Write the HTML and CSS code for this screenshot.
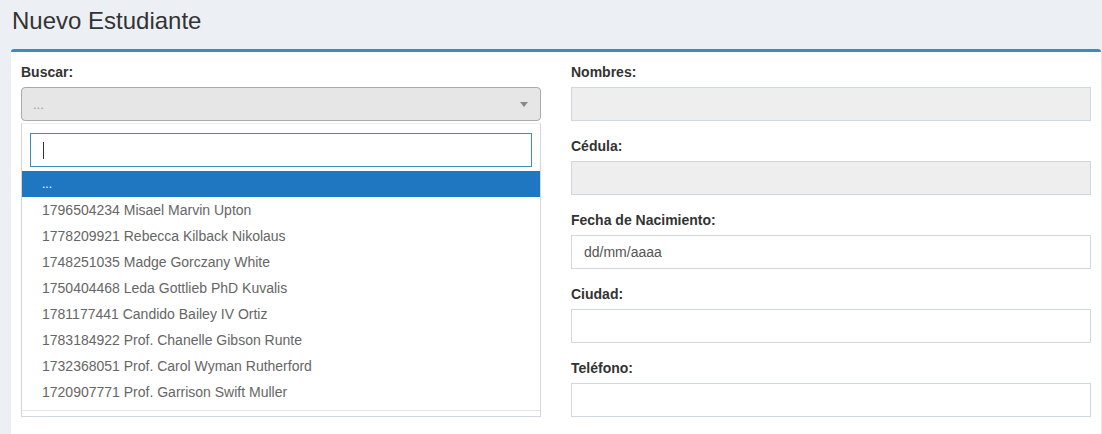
FILE: index.html
```html
<!DOCTYPE html>
<html lang="es">
<head>
  <meta charset="UTF-8">
  <meta name="viewport" content="width=device-width, initial-scale=1.0">
  <title>Nuevo Estudiante</title>
  <link rel="stylesheet" href="styles.css">
</head>
<body>
  <!-- Cabecera -->
  <section class="content-header">
    <h1>Nuevo Estudiante</h1>
  </section>

  <section class="content">
    <div class="box">
      <div class="box-body">
        <div class="row">

          <!-- Columna izquierda: buscador -->
          <div class="col">
            <div class="form-group">
              <label>Buscar:</label>
              <div class="select-box">
                <span class="select-placeholder">...</span>
                <span class="select-arrow"></span>
              </div>
              <div class="dropdown">
                <div class="dropdown-search">
                  <input type="text" class="search-field">
                </div>
                <ul class="results">
                  <li class="option highlighted">...</li>
                  <li class="option">1796504234 Misael Marvin Upton</li>
                  <li class="option">1778209921 Rebecca Kilback Nikolaus</li>
                  <li class="option">1748251035 Madge Gorczany White</li>
                  <li class="option">1750404468 Leda Gottlieb PhD Kuvalis</li>
                  <li class="option">1781177441 Candido Bailey IV Ortiz</li>
                  <li class="option">1783184922 Prof. Chanelle Gibson Runte</li>
                  <li class="option">1732368051 Prof. Carol Wyman Rutherford</li>
                  <li class="option">1720907771 Prof. Garrison Swift Muller</li>
                </ul>
              </div>
            </div>
          </div>

          <!-- Columna derecha: datos -->
          <div class="col">
            <div class="form-group">
              <label>Nombres:</label>
              <input type="text" class="form-control" disabled>
            </div>
            <div class="form-group">
              <label>Cédula:</label>
              <input type="text" class="form-control" disabled>
            </div>
            <div class="form-group">
              <label>Fecha de Nacimiento:</label>
              <input type="text" class="form-control" placeholder="dd/mm/aaaa">
            </div>
            <div class="form-group">
              <label>Ciudad:</label>
              <input type="text" class="form-control">
            </div>
            <div class="form-group">
              <label>Teléfono:</label>
              <input type="text" class="form-control">
            </div>
          </div>

        </div>
      </div>
    </div>
  </section>
</body>
</html>
```

FILE: styles.css
```css
/* Estilos generales */
* {
  box-sizing: border-box;
}

body {
  margin: 0;
  background-color: #ecf0f5;
  font-family: "Liberation Sans", Arial, sans-serif;
  font-size: 14px;
  line-height: 20px;
  color: #333;
  overflow: hidden;
}

/* Cabecera */
.content-header {
  height: 49px;
  padding: 8px 12px 0;
}

.content-header h1 {
  margin: 0;
  font-size: 24px;
  font-weight: normal;
  line-height: 26px;
  color: #333;
}

.content {
  padding: 0 1px 0 11px;
}

/* Caja principal */
.box {
  background: #fff;
  border-top: 3px solid #3c8dbc;
  border-radius: 3px;
  box-shadow: 0 1px 1px rgba(0, 0, 0, 0.1);
}

.box-body {
  padding: 10px;
}

.row {
  display: grid;
  grid-template-columns: 1fr 1fr;
  column-gap: 30px;
}

.form-group {
  margin-bottom: 15px;
}

label {
  display: block;
  margin-bottom: 5px;
  font-weight: bold;
}

.form-control {
  display: block;
  width: 100%;
  height: 34px;
  padding: 6px 12px;
  font-family: inherit;
  font-size: 14px;
  color: #555;
  background: #fff;
  border: 1px solid #d2d6de;
  border-radius: 0;
  outline: none;
}

.form-control:disabled {
  background-color: #eee;
}

.form-control::placeholder {
  color: #555;
}

/* Selector tipo select2 */
.select-box {
  position: relative;
  height: 34px;
  padding: 6px 11px;
  background-color: #e6e6e6;
  border: 1px solid #aaa;
  border-radius: 4px;
}

.select-placeholder {
  color: #999;
  font-size: 13px;
}

.select-arrow {
  position: absolute;
  right: 12px;
  top: 14px;
  border-top: 5px solid #888;
  border-left: 4px solid transparent;
  border-right: 4px solid transparent;
}

.dropdown {
  margin-top: 2px;
  border: 1px solid #d2d6de;
  border-top-color: #eee;
  background: #fff;
  padding-bottom: 5px;
}

.dropdown-search {
  position: relative;
  padding: 9px 8px 4px;
}

/* Cursor de texto dentro del buscador */
.dropdown-search::after {
  content: "";
  position: absolute;
  left: 21px;
  top: 18px;
  width: 1px;
  height: 17px;
  background: #333;
}

.search-field {
  display: block;
  width: 100%;
  height: 34px;
  padding: 6px 12px;
  border: 1px solid #3c8dbc;
  font-family: inherit;
  font-size: 14px;
  outline: none;
}

.results {
  list-style: none;
  margin: 0;
  padding: 0 0 5px;
  border-bottom: 1px solid #e4e4e4;
}

.option {
  height: 26px;
  padding: 3px 20px;
  color: #666;
}

.option.highlighted {
  background-color: #1f77c2;
  color: #fff;
  font-size: 12px;
}
```
